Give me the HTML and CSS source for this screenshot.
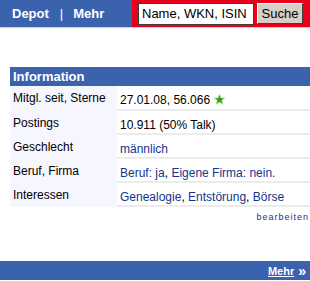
FILE: index.html
```html
<!DOCTYPE html>
<html lang="de">
<head>
    <meta charset="UTF-8">
    <title>Profil</title>
    <link rel="stylesheet" href="styles.css">
</head>
<body>
    <div class="topbar">
        <div class="topnav">
            <a href="#">Depot</a>
            <span class="sep">|</span>
            <a href="#">Mehr</a>
        </div>
        <form class="search">
            <input type="text" value="Name, WKN, ISIN">
            <button type="button">Suche</button>
        </form>
    </div>

    <table class="info">
        <tr>
            <th colspan="2">Information</th>
        </tr>
        <tr>
            <td class="label">Mitgl. seit, Sterne</td>
            <td class="value">27.01.08, 56.066
                <svg class="star" width="11" height="11" viewBox="0 0 11 11">
                    <polygon points="5.5,0.5 6.9,4 10.5,4.1 7.7,6.4 8.7,10.2 5.5,8.1 2.3,10.2 3.3,6.4 0.5,4.1 4.1,4" fill="#2f9a22" stroke="#8fe07a" stroke-width="0.8"/>
                </svg>
            </td>
        </tr>
        <tr>
            <td class="label">Postings</td>
            <td class="value">10.911 (50% Talk)</td>
        </tr>
        <tr>
            <td class="label">Geschlecht</td>
            <td class="value"><a href="#">männlich</a></td>
        </tr>
        <tr>
            <td class="label">Beruf, Firma</td>
            <td class="value"><a href="#">Beruf: ja</a>, <a href="#">Eigene Firma: nein.</a></td>
        </tr>
        <tr>
            <td class="label">Interessen</td>
            <td class="value"><a href="#">Genealogie</a>, <a href="#">Entstörung</a>, <a href="#">Börse</a></td>
        </tr>
    </table>

    <div class="edit"><a href="#">bearbeiten</a></div>

    <div class="bottombar">
        <a href="#">Mehr</a> <span class="arrows">&raquo;</span>
    </div>
</body>
</html>
```

FILE: styles.css
```css
body {
    margin: 0;
    font-family: "Liberation Sans", Arial, sans-serif;
    font-size: 12px;
    background-color: #fff;
    overflow: hidden;
}
a {
    color: #13348f;
    text-decoration: none;
}
.topbar {
    display: flex;
    height: 27px;
    border-bottom: 1px solid #cfcfcf;
}
.topnav {
    width: 132px;
    background-color: #3a62ad;
    display: flex;
    align-items: center;
    padding-left: 12px;
    box-sizing: border-box;
    font-weight: bold;
    font-size: 13px;
}
.topnav a {
    color: #fff;
}
.topnav .sep {
    color: #fff;
    font-weight: normal;
    margin: 0 10px 0 11px;
}
.search {
    flex: 1;
    margin: 0;
    background-color: #e8001c;
    display: flex;
    align-items: center;
    padding-left: 6px;
    gap: 3px;
}
.search input {
    width: 116px;
    height: 22px;
    box-sizing: border-box;
    margin: 0;
    border: 1px solid #3c3c3c;
    padding: 0 3px;
    font-family: "Liberation Sans", Arial, sans-serif;
    font-size: 13px;
    color: #000;
}
.search button {
    width: 46px;
    height: 21px;
    margin: 0;
    padding: 0;
    background-color: #d4d0c8;
    border: 1px solid;
    border-color: #fff #404040 #404040 #fff;
    font-family: "Liberation Sans", Arial, sans-serif;
    font-size: 13px;
    color: #000;
}
.info {
    margin: 39px 0 0 10px;
    width: 300px;
    border-collapse: collapse;
}
.info th {
    background-color: #3a62ad;
    color: #fff;
    font-size: 13px;
    font-weight: bold;
    text-align: left;
    height: 19px;
    padding: 0 3px;
}
.info td {
    height: 24px;
    box-sizing: border-box;
    vertical-align: top;
    white-space: nowrap;
}
.info .label {
    width: 107px;
    background-color: #f6f6ff;
    border-bottom: 2px solid #f6f6ff;
    padding: 5px 3px 0;
}
.info .value {
    border-bottom: 2px solid #ececec;
    padding: 7px 3px 0;
}
.star {
    vertical-align: -1px;
    margin-left: 1px;
}
.edit {
    text-align: right;
    padding: 5px 1px 0 0;
    font-size: 9px;
    letter-spacing: 1px;
    height: 49px;
}
.bottombar {
    background-color: #3a62ad;
    height: 19px;
    display: flex;
    align-items: center;
    justify-content: flex-end;
    padding-right: 4px;
    gap: 4px;
    color: #fff;
    font-weight: bold;
    font-size: 11px;
}
.bottombar a {
    color: #fff;
    text-decoration: underline;
}
.bottombar .arrows {
    font-size: 14px;
    line-height: 1;
}
```
